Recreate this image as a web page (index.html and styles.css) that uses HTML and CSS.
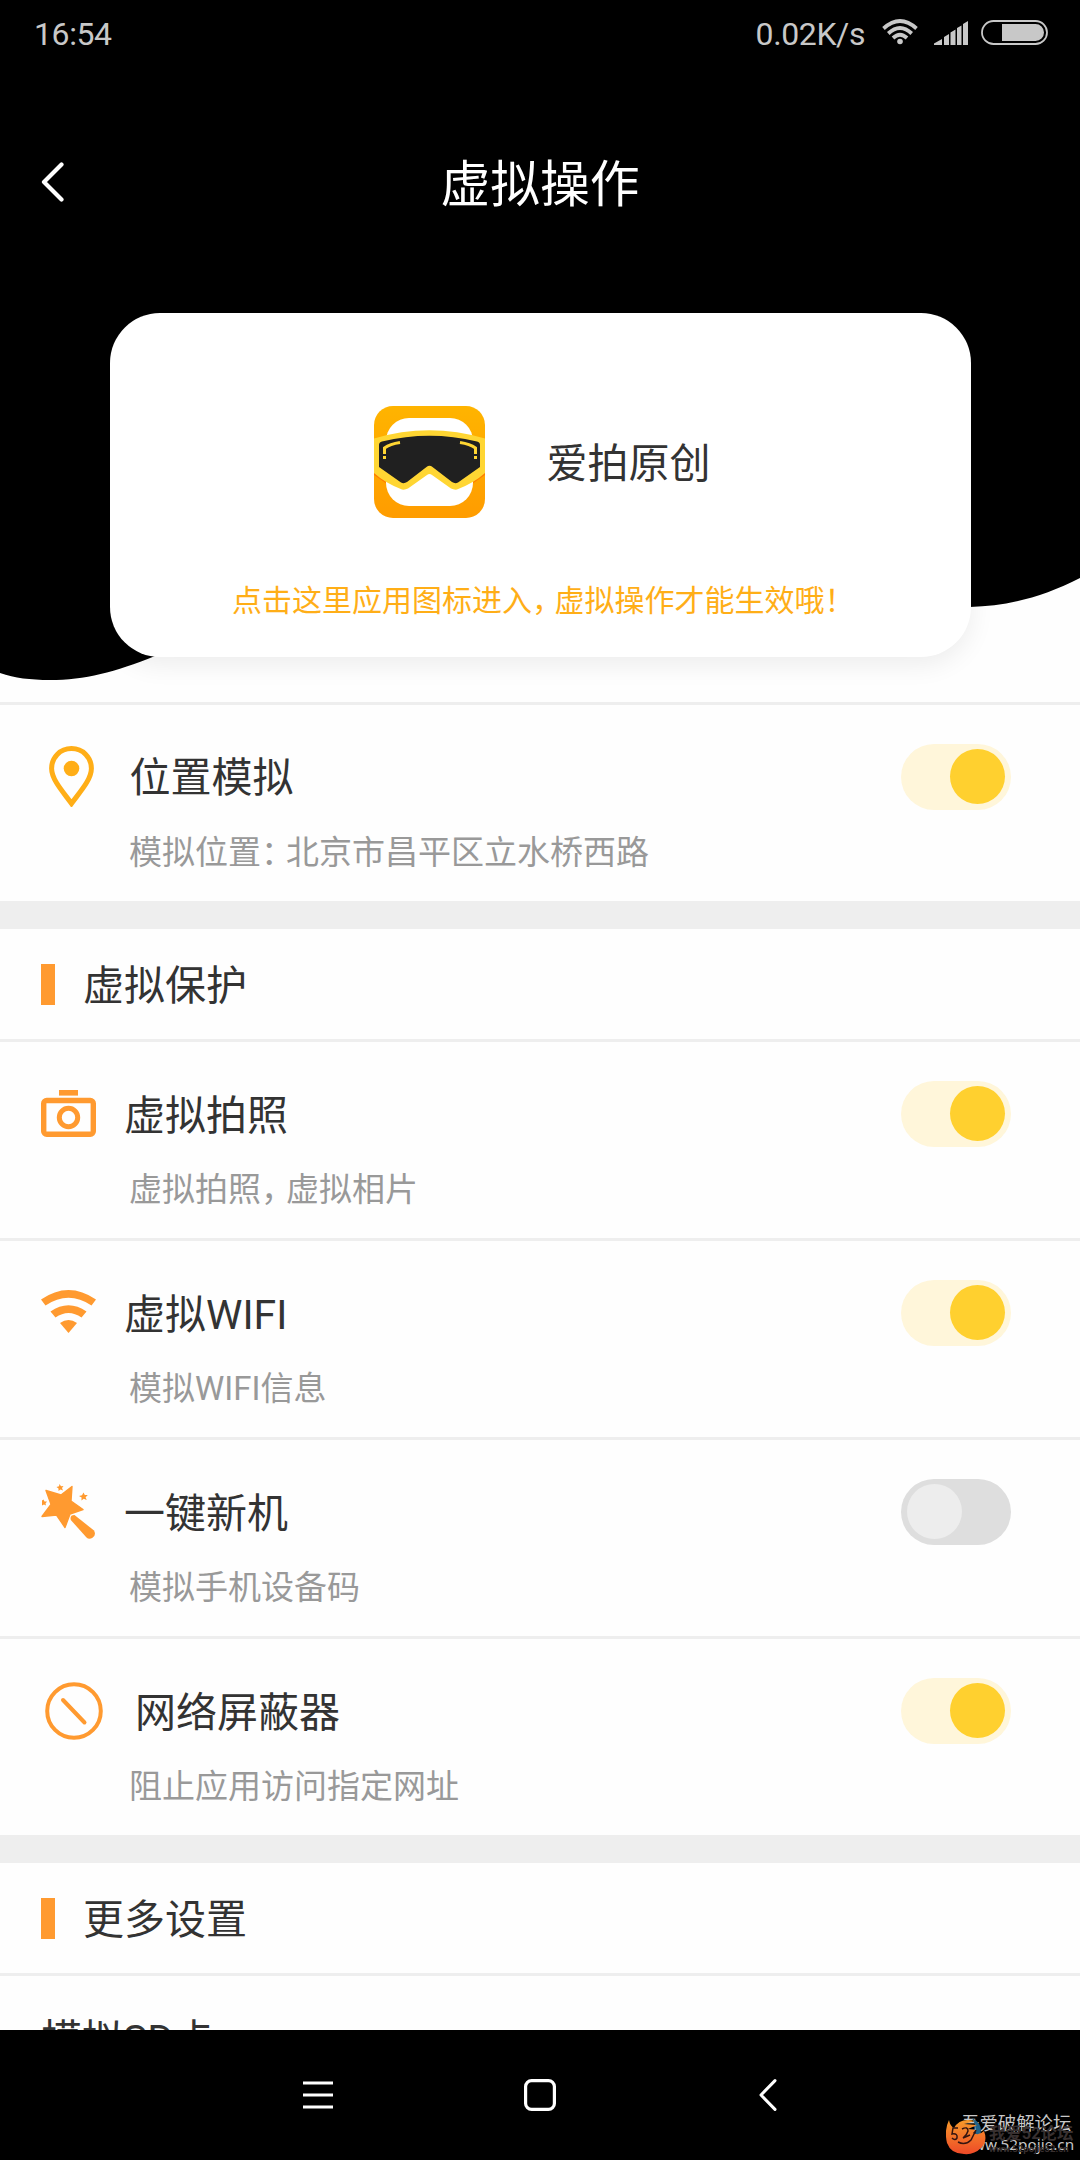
FILE: index.html
```html
<!DOCTYPE html>
<html lang="zh-CN">
<head>
<meta charset="utf-8">
<title>虚拟操作</title>
<link rel="stylesheet" href="styles.css">
</head>
<body>
<div class="screen">
  <header class="hero">
    <svg class="hero-bg" width="1080" height="702" viewBox="0 0 1080 702" aria-hidden="true">
      <path d="M0 0H1080V578C1043 597 1008 606 970 607C700 612 450 540 155 656C115 672 85 680 50 680C30 680 15 678 0 673Z" fill="#000"/>
    </svg>
    <div class="status">
      <span class="time">16:54</span>
      <span class="speed">0.02K/s</span>
      <svg class="st-wifi" width="36" height="26" viewBox="0 0 36 26" fill="none" stroke="#c8c8c8" stroke-width="3.8">
        <path d="M1.500 9.500Q18-5.500 34.500 9.500"/>
        <path d="M6.300 14.500Q18 3.500 29.700 14.500"/>
        <path d="M11 19Q18 12.500 25 19"/>
        <circle cx="18" cy="22.500" r="2.800" fill="#c8c8c8" stroke="none"/>
      </svg>
      <svg class="st-signal" width="35" height="24" viewBox="0 0 35 24" fill="#c8c8c8">
        <path d="M0 24V22.500L8 18V24ZM10 24V16L15 13V24ZM16.500 24V11.500L21.500 8.500V24ZM23 24V7L27.500 4.500V24ZM29 24V3L34 0V24Z"/>
      </svg>
      <svg class="st-battery" width="67" height="25" viewBox="0 0 67 25">
        <rect x="1" y="1" width="65" height="23" rx="11.500" fill="none" stroke="#c8c8c8" stroke-width="1.800"/>
        <path d="M21 4H54.500A8.500 8.500 0 0 1 54.500 21H21Z" fill="#c8c8c8"/>
      </svg>
    </div>
    <div class="titlebar">
      <svg class="back" width="24" height="42" viewBox="0 0 24 42" fill="none" stroke="#fff" stroke-width="4.200" stroke-linecap="round" stroke-linejoin="round"><path d="M21.500 3.500L4 21L21.500 38.500"/></svg>
      <h1>虚拟操作</h1>
    </div>
    <div class="card">
      <div class="app">
        <svg width="111" height="112" viewBox="0 0 111 112">
          <defs>
            <linearGradient id="frame" x1="0" y1="0" x2="0" y2="1"><stop offset="0" stop-color="#ffb400"/><stop offset="1" stop-color="#ff9c00"/></linearGradient>
          </defs>
          <rect width="111" height="112" rx="19" fill="url(#frame)"/>
          <path d="M0 66L13 76V78L0 69ZM111 66L98 76V78L111 69Z" fill="#ff7d00"/>
          <rect x="12" y="12" width="87" height="88" rx="23" fill="#fff"/>
          <path d="M0 32.500Q55 16 111 32.500V67Q100 77 83 83.500Q80 84 77 82.500L58 69Q55.500 67 53 69L34 82.500Q31 84 28 83.500Q11 77 0 67Z" fill="#ffd633"/>
          <path d="M5 39Q5 36 8 35.500Q55.500 24 103 35.500Q106 36 106 39V61L84 76.500Q81 78 78 76L58.500 61Q55.500 58.500 52.500 61L33 76Q30 78 27 76.500L5 61Z" fill="#202020"/>
          <g fill="none" stroke="#ffd633" stroke-width="3"><path d="M26 36.500Q16 38 10.500 42V48M10.500 50V53M86 36.500Q96 38 101.500 42V48M101.500 50V53"/></g>
        </svg>
        <span class="app-name">爱拍原创</span>
      </div>
      <p class="notice">点击这里应用图标进入<span class="np">，</span>虚拟操作才能生效哦<span class="ne">！</span></p>
    </div>
  </header>

  <main class="list">
    <section class="row">
      <div class="row-main">
        <svg class="ic-pin" width="45" height="61" viewBox="0 0 45 61" fill="#ffae17">
          <path d="M22.500 2.600C11 2.600 2.600 11.500 2.600 22.500C2.600 34 15 47 22.500 57.500C30 47 42.400 34 42.400 22.500C42.400 11.500 34 2.600 22.500 2.600Z" fill="none" stroke="#ffae17" stroke-width="5"/>
          <circle cx="22.500" cy="22.500" r="7.800"/>
        </svg>
        <h2>位置模拟</h2>
        <span class="toggle on"></span>
      </div>
      <p class="sub">模拟位置<span class="sp">：</span>北京市昌平区立水桥西路</p>
    </section>
    <div class="gap"></div>
    <div class="head"><i class="bar"></i><h2>虚拟保护</h2></div>
    <section class="row line">
      <div class="row-main">
        <svg class="ic" width="55" height="47" viewBox="0 0 55 47" fill="none" stroke="#ff9a30">
          <rect x="2.700" y="10.500" width="49.600" height="33.800" rx="3" stroke-width="5.400"/>
          <circle cx="27.500" cy="27.500" r="9.200" stroke-width="5"/>
          <path d="M18 2.800H37" stroke-width="5.600"/>
        </svg>
        <h2>虚拟拍照</h2>
        <span class="toggle on"></span>
      </div>
      <p class="sub">虚拟拍照<span class="sp">，</span>虚拟相片</p>
    </section>
    <section class="row line">
      <div class="row-main">
        <svg class="ic ic-wifi" width="55" height="43" viewBox="0 0 55 43" fill="#ff9a30">
          <path d="M0 9.500Q27.500-9.500 55 9.500L50.500 15.500Q27.500 0 4.500 15.500Z"/>
          <path d="M9.500 21.500Q27.500 9 45.500 21.500L40.500 27.500Q27.500 18.500 14.500 27.500Z"/>
          <path d="M19 33Q27.500 27 36 33L27.500 43Z"/>
        </svg>
        <h2>虚拟WIFI</h2>
        <span class="toggle on"></span>
      </div>
      <p class="sub">模拟WIFI信息</p>
    </section>
    <section class="row line">
      <div class="row-main">
        <svg class="ic" width="55" height="55" viewBox="0 0 55 55" fill="#ff9a30">
          <path d="M5 6.500L20 11L31 2.500L30 17L42 25.500L29 30L24 43.500L15.500 31L1 32.500L10 20.300Z" stroke="#ff9a30" stroke-width="1.400" stroke-linejoin="round"/>
          <path d="M29.800 36Q28.500 31 33.500 31L53 46.500Q55.500 51 51.500 53.800Q48 56 45.500 53.500Z"/>
          <path d="M18.500 0L20 2.200L22.500 2L21 4L22 6.500L19.500 5.600L17.500 7L17.500 4.600L15.500 3L18 2.300ZM42.500 8.500L43.800 11L46.800 11L44.600 13.300L45.700 16L42.800 14.800L40.400 16.600L40.600 13.600L38 12L41 11.300ZM2.500 15.500L3.500 17.500L6 17.500L4.500 19.500L5 21.500L3 20.600L1 21.500V16.500Z"/>
        </svg>
        <h2>一键新机</h2>
        <span class="toggle"></span>
      </div>
      <p class="sub">模拟手机设备码</p>
    </section>
    <section class="row line">
      <div class="row-main">
        <svg class="ic-ban" width="58" height="58" viewBox="0 0 58 58" fill="none" stroke="#ff9a30" stroke-width="4" stroke-linecap="round">
          <circle cx="29" cy="29" r="26.800"/><path d="M18 18L39.500 40.500"/>
        </svg>
        <h2>网络屏蔽器</h2>
        <span class="toggle on"></span>
      </div>
      <p class="sub">阻止应用访问指定网址</p>
    </section>
    <div class="gap"></div>
    <div class="head"><i class="bar"></i><h2>更多设置</h2></div>
    <section class="row line plain"><h2>模拟SD卡</h2></section>
  </main>

  <nav class="nav">
    <svg width="30" height="28" viewBox="0 0 30 28" stroke="#fff" stroke-width="3"><path d="M0 2H30M0 14H30M0 26H30"/></svg>
    <svg width="32" height="32" viewBox="0 0 32 32" fill="none" stroke="#fff" stroke-width="3.200"><rect x="1.600" y="1.600" width="28.800" height="28.800" rx="6"/></svg>
    <svg width="18" height="32" viewBox="0 0 18 32" fill="none" stroke="#fff" stroke-width="3" stroke-linecap="round" stroke-linejoin="round"><path d="M16 1.600L2 16L16 30.400"/></svg>
  </nav>

  <div class="mark">
    <p class="mark-a">吾爱破解论坛</p>
    <p class="mark-b">www.52pojie.cn</p>
    <p class="mark-c">我爱52论坛</p>
    <p class="mark-d">www.52pojie52.cn</p>
    <svg class="mark-logo" width="40" height="38" viewBox="0 0 40 38">
      <defs><linearGradient id="fire" x1="0" y1="0" x2="0" y2="1"><stop offset="0" stop-color="#f79a2a"/><stop offset="1" stop-color="#ee4a28"/></linearGradient></defs>
      <path d="M26 1Q39 7 33 23L27 26Q33 12 26 1Z" fill="#1f6288"/>
      <path d="M3 3Q4 9 8 11Q14 0 29 4L18 7L31 8L22 12L30 13L27 16Q33 19 38 14Q42 24 35 31Q28 38 18 37Q5 37 1 26Q-2 13 3 3Z" fill="url(#fire)"/>
      <path d="M12 11H7L6 17Q12 16 11 21Q9 24 6 21M16 12Q22 9 22 14Q21 18 17 21L24 18M30 13L25 23Q19 29 12 25" fill="none" stroke="#351510" stroke-width="1.500"/>
    </svg>
  </div>
</div>
</body>
</html>
```
FILE: styles.css
```css
* { box-sizing: border-box; }
body {
  margin: 0;
  background: #fff;
  font-family: Roboto, "Noto Sans CJK SC", sans-serif;
  color: #333;
}
h1, h2, p { margin: 0; font-weight: 400; }
svg { display: block; flex: none; }

.screen {
  position: relative;
  width: 1080px;
  height: 2160px;
  overflow: hidden;
  display: flex;
  flex-direction: column;
  background: #fefefe;
}

/* header */
.hero {
  position: relative;
  height: 702px;
  flex: none;
  display: flex;
  flex-direction: column;
}
.hero-bg { position: absolute; left: 0; top: 0; }
.hero > div { position: relative; }
.status {
  height: 68px;
  padding: 0 32px 0 34px;
  display: flex;
  align-items: flex-start;
  color: #c8c8c8;
  font-size: 32px;
  line-height: 38px;
}
.time, .speed { padding-top: 15px; }
.time { letter-spacing: -0.4px; }
.speed { margin-left: auto; letter-spacing: -0.4px; }
.st-wifi { margin: 19px 0 0 17px; }
.st-signal { margin: 21px 0 0 16px; }
.st-battery { margin: 20px 0 0 12px; }

.titlebar {
  height: 228px;
  padding-left: 40px;
  display: grid;
  grid-template-columns: 24px 1fr 64px;
  align-items: start;
  color: #fff;
}
.back { margin-top: 92.5px; }
h1 {
  margin-top: 87px;
  font-size: 49.8px;
  line-height: 60px;
  text-align: center;
}

.card {
  width: 861px;
  height: 344px;
  margin: 17px 0 0 109.5px;
  border-radius: 50px;
  background: #fff;
  box-shadow: 0 8px 26px rgba(0, 0, 0, 0.07);
  display: flex;
  flex-direction: column;
}
.app {
  padding: 93px 0 0 264.5px;
  display: flex;
  align-items: center;
}
.app-name {
  margin-left: 61.5px;
  padding-top: 4px;
  font-size: 41px;
  line-height: 50px;
}
.notice {
  margin-top: 64px;
  padding-left: 122.5px;
  font-size: 30px;
  line-height: 38px;
  color: #ffae17;
  white-space: nowrap;
}
.np { margin-right: -7.5px; }
.ne { margin-right: -8px; }

/* list */
.list {
  height: 1328px;
  flex: none;
  overflow: hidden;
  border-top: 3px solid #eee;
}
.row { height: 196px; padding: 39px 69px 0 41px; }
.line { height: 199px; border-top: 3px solid #eee; }
.row-main { height: 66px; display: flex; align-items: center; }
.row-main h2 { margin-left: 28px; padding-top: 3px; }
h2 { font-size: 41px; line-height: 48px; white-space: nowrap; }
.ic { margin-top: -1px; }
.ic-pin { margin: -2px 0 0 8px; }
.row-main .ic-pin + h2 { margin-left: 35.5px; padding-top: 2px; }
.ic-wifi { margin-top: -3px; }
.ic-ban { margin-left: 4px; }
.row-main .ic-ban + h2 { margin-left: 32px; }
.sub {
  margin-top: 23px;
  padding-left: 88px;
  font-size: 33px;
  line-height: 40px;
  color: #999;
  white-space: nowrap;
}
.sp { margin-right: -8px; }

.toggle {
  width: 110px;
  height: 66px;
  margin-left: auto;
  padding: 5px 6px;
  border-radius: 33px;
  background: #dedede;
  display: flex;
}
.toggle::before {
  content: "";
  width: 55px;
  height: 55px;
  border-radius: 50%;
  background: #ededed;
}
.toggle.on { justify-content: flex-end; background: #fff6da; }
.toggle.on::before { background: #ffd02f; }

.gap { height: 28px; background: #eee; }
.head { height: 110px; padding-left: 41px; display: flex; align-items: center; }
.head .bar { width: 14px; height: 41px; background: #ff9a30; }
.head h2 { margin-left: 28px; padding-top: 4px; }
.plain { padding-top: 40px; }

/* bottom navigation */
.nav {
  height: 130px;
  flex: none;
  padding: 0 303px;
  background: #000;
  display: grid;
  grid-template-columns: 1fr auto 1fr;
  align-items: center;
}
.nav svg:last-child { justify-self: end; }

.mark { position: absolute; left: 946px; top: 2112px; width: 134px; height: 48px; white-space: nowrap; }
.mark p, .mark-logo { position: absolute; }
.mark-a { left: 15px; top: 1px; font-size: 18.4px; line-height: 22px; color: #c8c8c8; }
.mark-b { left: 15px; top: 21px; font: 15.3px/22px "Noto Sans", sans-serif; color: #c8c8c8; }
.mark-c { left: 43px; top: 12px; font-size: 16.4px; line-height: 20px; font-weight: 700; color: #383030; }
.mark-d { left: 43px; top: 31px; font-size: 9.6px; line-height: 11px; font-weight: 700; color: #383030; }
.mark-logo { left: 0; top: 5px; }
```
